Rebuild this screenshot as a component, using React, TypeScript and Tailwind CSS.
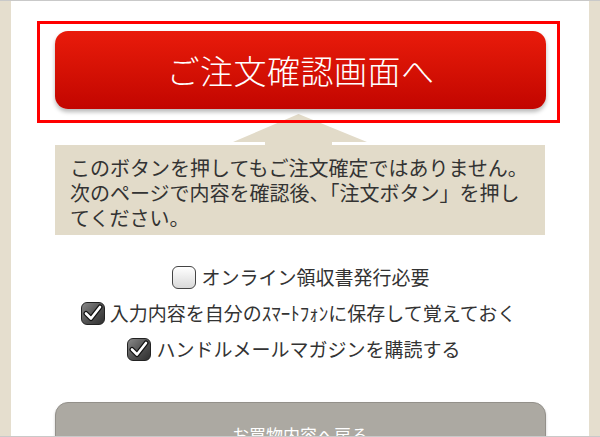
import React from "react";

function Box({ checked }: { checked?: boolean }) {
  if (!checked) {
    return (
      <span className="inline-block w-[24px] h-[23px] shrink-0 rounded-[6px] border-[1.5px] border-[#444] bg-gradient-to-b from-[#ffffff] to-[#d9d9d9] shadow-[inset_0_1px_1px_rgba(255,255,255,0.9)]" />
    );
  }
  return (
    <span className="relative inline-flex items-center justify-center w-[24px] h-[23px] shrink-0 rounded-[6px] border-[1.5px] border-[#222] bg-gradient-to-br from-[#8a8a8a] via-[#555] to-[#2f2f2f]">
      <svg width="20" height="18" viewBox="0 0 20 18">
        <path d="M3 9.5 L8 14.5 L17 3" fill="none" stroke="#111" strokeWidth="5" strokeLinecap="round" strokeLinejoin="round" />
        <path d="M3 9.5 L8 14.5 L17 3" fill="none" stroke="#fff" strokeWidth="2.6" strokeLinecap="round" strokeLinejoin="round" />
      </svg>
    </span>
  );
}

export default function App() {
  const font = "font-['Noto_Sans_CJK_JP','Noto_Sans',sans-serif]";
  return (
    <div className={`w-[600px] h-[437px] overflow-hidden flex bg-[#e5dece] border-y border-[#c9c9c9] ${font}`}>
      <div className="w-[11px] shrink-0" />
      <div className="w-[578px] shrink-0 bg-white pt-[20px]">
        {/* main action, highlighted */}
        <div className="relative z-10 ml-[26px] w-[523px] border-[3px] border-[#ff0000] pt-[7px] pb-[11px]">
          <button className="ml-[15px] w-[491px] h-[78px] rounded-[13px] bg-gradient-to-b from-[#e91b0b] to-[#c20500] shadow-[0_3px_4px_rgba(0,0,0,0.28)] flex items-center justify-center text-white text-[33px] leading-none font-light tracking-[0.5px]">
            ご注文確認画面へ
          </button>
        </div>

        <svg className="ml-[222px] -mt-[9px] block" width="134" height="31" viewBox="0 0 134 31">
          <polygon points="65.5,0 134,28 99,28 99,31 32,31 32,28 0,28" fill="#e2dbc9" />
        </svg>

        <div className="mx-auto w-[490px] bg-[#e2dbc9] pt-[10px] pb-[5px] px-[15px] text-[20px] leading-[25px] text-[#333] whitespace-nowrap">
          このボタンを押してもご注文確定ではありません。
          <br />
          次のページで内容を確認後、「注文ボタン」を押し
          <br />
          てください。
        </div>

        <div className="mt-[24px] flex flex-col text-[19px] text-[#333]">
          <label className="h-[36px] flex items-center justify-center gap-[5px] pl-[2px]">
            <Box />
            <span>オンライン領収書発行必要</span>
          </label>
          <label className="h-[36px] flex items-center justify-center gap-[5px] pr-[3px]">
            <Box checked />
            <span>入力内容を自分のｽﾏｰﾄﾌｫﾝに保存して覚えておく</span>
          </label>
          <label className="h-[36px] flex items-center justify-center gap-[5px] pr-[12px]">
            <Box checked />
            <span>ハンドルメールマガジンを購読する</span>
          </label>
        </div>

        <button className="mt-[35px] mx-auto w-[491px] h-[66px] rounded-[13px] border border-[#93908a] bg-[#aca9a2] shadow-[0_2px_3px_rgba(0,0,0,0.2)] flex items-center justify-center text-white text-[17px]">
          お買物内容へ戻る
        </button>
      </div>
      <div className="flex-1" />
    </div>
  );
}
